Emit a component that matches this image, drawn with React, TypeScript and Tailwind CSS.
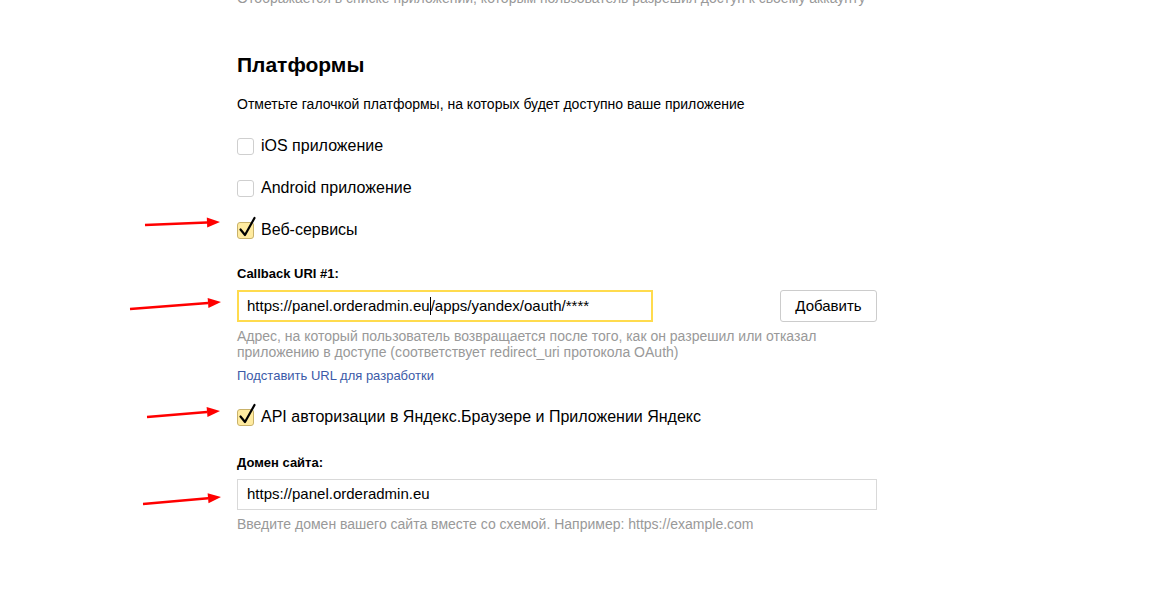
import { ReactNode } from "react";

function Check({ checked }: { checked?: boolean }) {
  return (
    <span className="relative inline-block w-[17px] h-[17px] shrink-0">
      <span
        className={
          checked
            ? "absolute inset-0 rounded-[3px] border border-[#c9b26a] bg-[#ffeba0]"
            : "absolute inset-0 rounded-[3px] border border-[#cfcfcf] bg-white"
        }
      />
      {checked && (
        <svg className="absolute left-[1px] top-[-6px]" width="19" height="22" viewBox="0 0 19 22">
          <path d="M2.5 13.5 L7 19 L16.5 2" fill="none" stroke="#000" strokeWidth="2.2" strokeLinecap="round" strokeLinejoin="round" />
        </svg>
      )}
    </span>
  );
}

function Row({ checked, children }: { checked?: boolean; children: ReactNode }) {
  return (
    <label className="flex items-center gap-[7px] h-[20px] text-[16px] text-black">
      <Check checked={checked} />
      <span>{children}</span>
    </label>
  );
}

function Arrow({ x1, y1, x2, y2 }: { x1: number; y1: number; x2: number; y2: number }) {
  const a = Math.atan2(y2 - y1, x2 - x1);
  const len = 13;
  const w = 5;
  const bx = x2 - len * Math.cos(a);
  const by = y2 - len * Math.sin(a);
  const px = -Math.sin(a) * w;
  const py = Math.cos(a) * w;
  return (
    <g>
      <line x1={x1} y1={y1} x2={bx} y2={by} stroke="#f00" strokeWidth="2.5" />
      <polygon points={`${x2},${y2} ${bx + px},${by + py} ${bx - px},${by - py}`} fill="#f00" />
    </g>
  );
}

export default function App() {
  return (
    <div
      className="relative w-[1175px] h-[594px] bg-white overflow-hidden"
      style={{ fontFamily: '"Liberation Sans", Arial, sans-serif' }}
    >
      <div className="ml-[237px] w-[640px] flex flex-col">
        <p className="-mt-[10px] text-[14px] leading-[17px] text-[#999]">
          Отображается в списке приложений, которым пользователь разрешил доступ к своему аккаунту
        </p>

        <h2 className="mt-[46px] text-[21px] leading-[24px] font-bold text-black">Платформы</h2>
        <p className="mt-[19px] text-[14px] leading-[17px] text-black">
          Отметьте галочкой платформы, на которых будет доступно ваше приложение
        </p>

        <div className="mt-[23px] flex flex-col gap-[22px]">
          <Row>iOS приложение</Row>
          <Row>Android приложение</Row>
          <Row checked>Веб-сервисы</Row>
        </div>

        <div className="mt-[26px] text-[13px] leading-[16px] font-bold text-black">Callback URI #1:</div>
        <div className="mt-[8px] flex items-center justify-between">
          <div className="w-[416px] h-[32px] border-2 border-[#ffdb4d] flex items-center px-[8px] text-[15px] text-black">
            <span>https://panel.orderadmin.eu</span>
            <span className="w-px h-[18px] bg-black" />
            <span>/apps/yandex/oauth/****</span>
          </div>
          <button className="w-[97px] h-[32px] border border-[#ccc] rounded-[3px] bg-white text-[15px] text-black">
            Добавить
          </button>
        </div>
        <p className="mt-[6px] text-[14px] leading-[16px] text-[#999]">
          Адрес, на который пользователь возвращается после того, как он разрешил или отказал приложению в доступе (соответствует redirect_uri протокола OAuth)
        </p>
        <a className="mt-[8px] text-[13px] leading-[16px] text-[#3b5aa8]">Подставить URL для разработки</a>

        <div className="mt-[23px]">
          <Row checked>API авторизации в Яндекс.Браузере и Приложении Яндекс</Row>
        </div>

        <div className="mt-[28px] text-[13px] leading-[16px] font-bold text-black">Домен сайта:</div>
        <div className="mt-[8px] w-[640px] h-[31px] border border-[#d9d9d9] flex items-center px-[9px] text-[15px] text-black">
          https://panel.orderadmin.eu
        </div>
        <p className="mt-[5px] text-[14px] leading-[18px] text-[#999]">
          Введите домен вашего сайта вместе со схемой. Например: https://example.com
        </p>
      </div>

      <svg className="absolute inset-0 pointer-events-none" width="1175" height="594">
        <Arrow x1={145} y1={225} x2={220} y2={222} />
        <Arrow x1={130} y1={309} x2={221} y2={302} />
        <Arrow x1={147} y1={417} x2={220} y2={411} />
        <Arrow x1={143} y1={504} x2={221} y2={497} />
      </svg>
    </div>
  );
}
